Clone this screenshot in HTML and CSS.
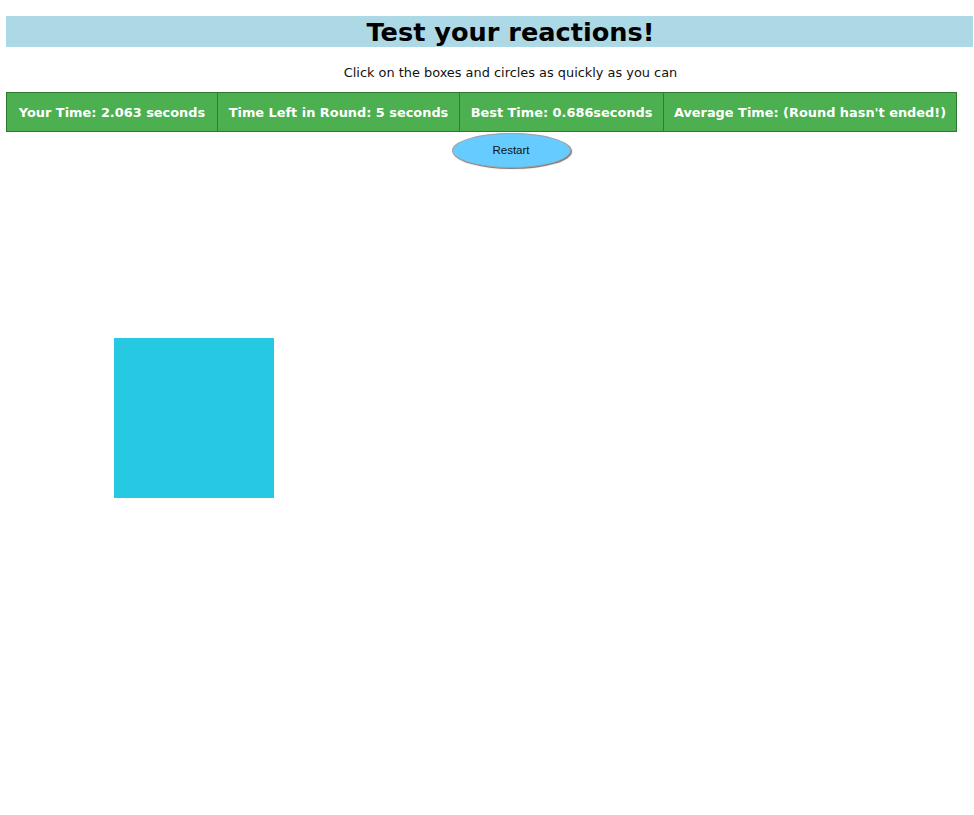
FILE: index.html
```html
<!DOCTYPE html>
<html>
<head>
<meta charset="utf-8">
<link rel="stylesheet" href="styles.css">
</head>
<body>
<div class="page">
  <h1 class="title">Test your reactions!</h1>
  <p class="subtitle">Click on the boxes and circles as quickly as you can</p>
  <div class="stats">
    <div class="cell c1">Your Time: 2.063 seconds</div>
    <div class="cell c2">Time Left in Round: 5 seconds</div>
    <div class="cell c3">Best Time: 0.686seconds</div>
    <div class="cell c4">Average Time: (Round hasn't ended!)</div>
  </div>
  <div class="controls">
    <button class="restart">Restart</button>
  </div>
  <div class="arena">
    <div class="shape"></div>
  </div>
</div>
</body>
</html>
```

FILE: styles.css
```css
html, body {
  margin: 0;
  padding: 0;
  background: #fff;
}
.page {
  padding: 16px 1px 0 6px;
  font-family: "DejaVu Sans", Verdana, sans-serif;
  color: #000;
}
.title {
  margin: 0;
  height: 31px;
  padding-left: 42px;
  background: #add8e6;
  text-align: center;
  font-size: 25.6px;
  font-weight: bold;
  line-height: 33px;
}
.subtitle {
  margin: 0;
  padding: 18px 0 0 42px;
  height: 27px;
  line-height: 16px;
  text-align: center;
  font-size: 12.9px;
  color: #111;
}
.stats {
  display: flex;
  width: 951px;
  height: 40px;
  box-sizing: border-box;
  background: #4caf50;
  border: 1px solid #2b7a2f;
}
.cell {
  display: flex;
  align-items: center;
  justify-content: center;
  color: #fff;
  font-weight: bold;
  font-size: 12.9px;
  white-space: nowrap;
  box-sizing: border-box;
}
.cell + .cell {
  border-left: 1px solid #2e7d32;
}
.c1 { width: 210px; }
.c2 { width: 242px; }
.c3 { width: 204px; }
.c4 { flex: 1; }
.controls {
  display: flex;
  justify-content: center;
  padding-left: 59px;
  width: 951px;
  box-sizing: border-box;
}
.restart {
  margin: 1px 0 0 0;
  width: 119px;
  height: 35px;
  border-radius: 50%;
  background: #66ccff;
  border: 1px solid #a0a0a0;
  box-shadow: 1px 1px 1px #777;
  font-family: "Liberation Sans", Arial, sans-serif;
  font-size: 11.5px;
  color: #111;
  padding: 0 0 2px 0;
}
.arena {
  height: 640px;
  padding: 170px 0 0 108px;
  box-sizing: border-box;
}
.shape {
  width: 160px;
  height: 160px;
  background: #26c9e1;
}
```
